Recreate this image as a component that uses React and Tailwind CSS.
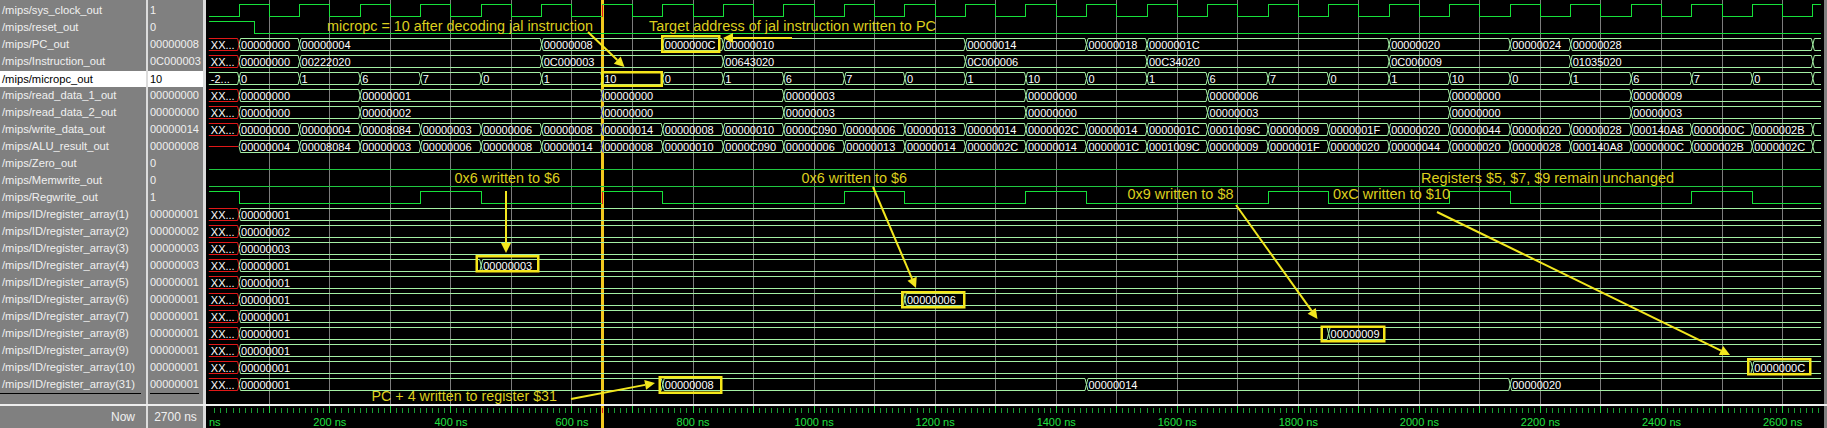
import React from 'react';

// waveform geometry: 100 ns = 60.53 px, rows are 17 px apart
const X = (t) => 208.8 + t * 0.6053;
const END_X = 1821;
const CURSOR_T = 650;
const top = (i) => 4.5 + 17 * i;
const bot = (i) => 16.5 + 17 * i;

const signals = [
    ['/mips/sys_clock_out', '1'],
    ['/mips/reset_out', '0'],
    ['/mips/PC_out', '00000008'],
    ['/mips/Instruction_out', '0C000003'],
    ['/mips/micropc_out', '10'],
    ['/mips/read_data_1_out', '00000000'],
    ['/mips/read_data_2_out', '00000000'],
    ['/mips/write_data_out', '00000014'],
    ['/mips/ALU_result_out', '00000008'],
    ['/mips/Zero_out', '0'],
    ['/mips/Memwrite_out', '0'],
    ['/mips/Regwrite_out', '1'],
    ['/mips/ID/register_array(1)', '00000001'],
    ['/mips/ID/register_array(2)', '00000002'],
    ['/mips/ID/register_array(3)', '00000003'],
    ['/mips/ID/register_array(4)', '00000003'],
    ['/mips/ID/register_array(5)', '00000001'],
    ['/mips/ID/register_array(6)', '00000001'],
    ['/mips/ID/register_array(7)', '00000001'],
    ['/mips/ID/register_array(8)', '00000001'],
    ['/mips/ID/register_array(9)', '00000001'],
    ['/mips/ID/register_array(10)', '00000001'],
    ['/mips/ID/register_array(31)', '00000001'],
];

const hex = (v) => v.padStart(8, '0');
// every 100 ns starting at 50 ns
const steps = (list, from = 50) => list.map((v, i) => [from + i * 100, String(v)]);

const buses = {
    2: [[50, '00000000'], [150, '00000004'], [550, '00000008'], [750, '0000000C'], [850, '00000010'], [1250, '00000014'], [1450, '00000018'], [1550, '0000001C'], [1950, '00000020'], [2150, '00000024'], [2250, '00000028'], [2650, '']],
    3: [[50, '00000000'], [150, '00222020'], [550, '0C000003'], [850, '00643020'], [1250, '0C000006'], [1550, '00C34020'], [1950, '0C000009'], [2250, '01035020'], [2650, '']],
    4: [...steps([0, 1, 6, 7, 0, 1, 10, 0, 1, 6, 7, 0, 1, 10, 0, 1, 6, 7, 0, 1, 10, 0, 1, 6, 7, 0]), [2650, '']],
    5: [[50, '00000000'], [250, '00000001'], [650, '00000000'], [950, '00000003'], [1350, '00000000'], [1650, '00000006'], [2050, '00000000'], [2350, '00000009']],
    6: [[50, '00000000'], [250, '00000002'], [650, '00000000'], [950, '00000003'], [1350, '00000000'], [1650, '00000003'], [2050, '00000000'], [2350, '00000003']],
    7: [...steps(['0', '4', '8084', '3', '6', '8', '14', '8', '10', 'C090', '6', '13', '14', '2C', '14', '1C', '1009C', '9', '1F', '20', '44', '20', '28', '140A8', 'C', '2B'].map(hex)), [2650, '']],
    8: [...steps(['4', '8084', '3', '6', '8', '14', '8', '10', 'C090', '6', '13', '14', '2C', '14', '1C', '1009C', '9', '1F', '20', '44', '20', '28', '140A8', 'C', '2B', '2C'].map(hex)), [2650, '']],
    12: [[50, '00000001']],
    13: [[50, '00000002']],
    14: [[50, '00000003']],
    15: [[50, '00000001'], [450, '00000003']],
    16: [[50, '00000001']],
    17: [[50, '00000001'], [1150, '00000006']],
    18: [[50, '00000001']],
    19: [[50, '00000001'], [1850, '00000009']],
    20: [[50, '00000001']],
    21: [[50, '00000001'], [2550, '0000000C']],
    22: [[50, '00000001'], [750, '00000008'], [1450, '00000014'], [2150, '00000020']],
};

const regwriteEdges = [50, 350, 450, 650, 750, 1050, 1150, 1350, 1450, 1750, 1850, 2050, 2150, 2450, 2550];

const clockPath = () => {
    let d = `M${X(0)} ${bot(0)}`;
    for (let t = 50; t <= 2650; t += 50) {
        d += ` H${X(t)} V${(t + 50) % 100 === 0 ? top(0) : bot(0)}`;
    }
    return d + ` H${END_X}`;
};

const regwritePath = () => {
    let d = `M${X(0)} ${top(11)}`;
    let high = true;
    regwriteEdges.forEach((t) => {
        high = !high;
        d += ` H${X(t)} V${high ? top(11) : bot(11)}`;
    });
    return d + ` H${END_X}`;
};

const segment = (i, x1, x2, open) => {
    const mid = (top(i) + bot(i)) / 2;
    if (open) return `M${x2} ${top(i)} H${x1 + 1.5} L${x1} ${mid} L${x1 + 1.5} ${bot(i)} H${x2}`;
    return `M${x1 + 1.5} ${top(i)} H${x2 - 1.5} L${x2} ${mid} L${x2 - 1.5} ${bot(i)} H${x1 + 1.5} L${x1} ${mid} Z`;
};

const BusRow = ({ row, segs }) => (
    <g>
        {row === 8 ? (
            <path d={`M${X(0)} ${top(8) + 6} H${X(50) - 1}`} stroke="#e01818" fill="none" />
        ) : (
            <>
                <path d={`M${X(0)} ${top(row)} H${X(50) - 1.5} L${X(50)} ${top(row) + 6} L${X(50) - 1.5} ${bot(row)} H${X(0)}`} stroke={row === 4 ? '#a4f0a4' : '#e01818'} fill="none" />
                <text x={X(0) + 2} y={bot(row) - 2} fill="#ffffff">{row === 4 ? '-2...' : 'XX...'}</text>
            </>
        )}
        {segs.map(([t, label], k) => {
            const x1 = X(t);
            const next = segs[k + 1];
            const x2 = next ? X(next[0]) : END_X;
            return (
                <g key={t}>
                    <path d={segment(row, x1, x2, !next)} stroke="#a4f0a4" fill="none" />
                    {label && <text x={x1 + 2} y={bot(row) - 2} fill="#ffffff">{label}</text>}
                </g>
            );
        })}
        {segs.some(([t]) => t === CURSOR_T) && (
            <path d={`M${X(CURSOR_T) + 1} ${top(row)} L${X(CURSOR_T) - 1} ${top(row) + 6} L${X(CURSOR_T) + 1} ${bot(row)}`} stroke="#5030d0" fill="none" />
        )}
    </g>
);

const Arrow = ({ x1, y1, x2, y2 }) => {
    const len = Math.hypot(x2 - x1, y2 - y1);
    const ux = (x2 - x1) / len;
    const uy = (y2 - y1) / len;
    const bx = x2 - ux * 10;
    const by = y2 - uy * 10;
    return (
        <g>
            <line x1={x1} y1={y1} x2={bx} y2={by} stroke="#f2e61e" strokeWidth="2" />
            <polygon points={`${x2},${y2} ${bx - uy * 5},${by + ux * 5} ${bx + uy * 5},${by - ux * 5}`} fill="#f2e61e" />
        </g>
    );
};

const arrows = [
    [588, 32, 624.5, 67],
    [792, 38, 723, 38],
    [506, 191, 506, 253],
    [873, 187, 916, 288],
    [1236, 205, 1317.5, 319],
    [1437, 212, 1730, 355],
    [571, 399, 655, 383],
];

const notes = [
    ['micropc = 10 after decoding jal instruction', 327, 31, 266],
    ['Target address of jal instruction written to PC', 649, 31, 287],
    ['0x6 written to $6', 454.5, 183, 105.5],
    ['0x6 written to $6', 801.5, 183, 105.5],
    ['Registers $5, $7, $9 remain unchanged', 1421, 183, 253],
    ['0x9 written to $8', 1127.5, 199, 106],
    ['0xC written to $10', 1333, 199, 117],
    ['PC + 4 written to register $31', 371.5, 400.5, 185.5],
];

// outer edges of the highlight boxes
const boxes = [
    [601, 71, 663, 87],
    [661, 35, 720.5, 53],
    [475.5, 255, 539.5, 272.5],
    [901, 291, 965.5, 308.5],
    [1320.5, 325.5, 1385.5, 342.5],
    [1747, 358, 1811.5, 375.5],
    [658.5, 376, 722.5, 394],
];

const gridTimes = Array.from({ length: 26 }, (_, i) => (i + 1) * 100);
const tickTimes = Array.from({ length: 266 }, (_, i) => (i + 1) * 10);
const labelTimes = Array.from({ length: 13 }, (_, i) => (i + 1) * 200);

const Waves = () => (
    <svg width="1618" height="404" viewBox="206 0 1618 404" className="block bg-black text-[11px] font-['Liberation_Sans',sans-serif]">
        <g shapeRendering="crispEdges">
            {gridTimes.map((t) => (
                <line key={t} x1={X(t)} y1="0" x2={X(t)} y2="404" stroke="#7c7c7c" />
            ))}
        </g>
        <rect x="601" y="0" width="3" height="404" fill="#f2c81e" />

        <g shapeRendering="crispEdges" fill="none">
            <path d={clockPath()} stroke="#16e03a" />
            <path d={`M${X(0)} ${top(1)} H${X(75)} V${bot(1)} H${END_X}`} stroke="#16e03a" />
            <path d={`M${X(0)} ${bot(9)} H${END_X}`} stroke="#20c840" />
            <path d={`M${X(0)} ${bot(10)} H${END_X}`} stroke="#20c840" />
            <path d={regwritePath()} stroke="#16e03a" />
            <path d={`M${X(CURSOR_T)} ${top(0)} V${bot(0)} M${X(CURSOR_T)} ${top(11)} V${bot(11)}`} stroke="#e01818" />
        </g>

        {Object.entries(buses).map(([row, segs]) => (
            <BusRow key={row} row={Number(row)} segs={segs} />
        ))}

        {boxes.map(([x1, y1, x2, y2]) => (
            <rect key={`${x1}-${y1}`} x={x1 + 1.25} y={y1 + 1.25} width={x2 - x1 - 2.5} height={y2 - y1 - 2.5} stroke="#f5e61a" strokeWidth="2.5" fill="none" />
        ))}
        {arrows.map(([x1, y1, x2, y2]) => (
            <Arrow key={`${x1}-${y1}`} x1={x1} y1={y1} x2={x2} y2={y2} />
        ))}
        {notes.map(([label, x, y, w]) => (
            <text key={`${label}-${x}`} x={x} y={y} fill="#dccf1e" fontSize="14" textLength={w} lengthAdjust="spacingAndGlyphs">{label}</text>
        ))}
    </svg>
);

const TimeAxis = () => (
    <svg width="1618" height="22" viewBox="206 406 1618 22" className="block bg-black text-[11px] font-['Liberation_Sans',sans-serif]">
        <rect x="601" y="406" width="3" height="22" fill="#f2c81e" />
        <g shapeRendering="crispEdges">
            {tickTimes.map((t) => (
                <line
                    key={t}
                    x1={X(t)}
                    y1={t % 100 === 0 ? 406 : 408}
                    x2={X(t)}
                    y2="413"
                    stroke={t === CURSOR_T ? '#e01818' : t % 100 === 0 ? '#20d040' : '#1a9c34'}
                />
            ))}
        </g>
        <text x="209" y="426" fill="#20e040">ns</text>
        {labelTimes.map((t) => (
            <text key={t} x={X(t)} y="426" fill="#20e040" textAnchor="middle">{t} ns</text>
        ))}
    </svg>
);

const App = () => (
    <div className="w-[1827px] h-[428px] flex flex-col overflow-hidden bg-[#808080] text-[#f0f0f0] font-['Liberation_Sans',sans-serif]">
        <div className="flex h-[404px]">
            {/* Signal names */}
            <div className="w-[146px] pt-[2px] text-[11.2px]">
                {signals.map(([name], i) => (
                    <div key={name} className={`h-[17px] pl-[2px] flex items-center whitespace-nowrap ${i === 4 ? 'bg-white text-black border-t border-[#808080]' : ''}`}>
                        {name}
                    </div>
                ))}
                <div className="h-px mr-[5px] bg-black"></div>
            </div>
            <div className="w-[2px] bg-[#dcdcdc]"></div>
            {/* Values at the cursor */}
            <div className="w-[55px] pt-[2px] text-[11px]">
                {signals.map(([name, value], i) => (
                    <div key={name} className={`h-[17px] pl-[2px] flex items-center ${i === 4 ? 'bg-white text-black border-t border-[#808080]' : ''}`}>
                        {value}
                    </div>
                ))}
                <div className="h-px ml-[2px] mr-[4px] bg-black"></div>
            </div>
            <div className="w-[3px] bg-[#dcdcdc]"></div>
            <Waves />
            <div className="w-[3px]"></div>
        </div>
        <div className="h-[2px] bg-[#eeeeee]"></div>
        <div className="flex flex-1">
            <div className="w-[146px] pr-[11px] text-right text-[12px] leading-[22px]">Now</div>
            <div className="w-[2px] bg-[#dcdcdc]"></div>
            <div className="w-[55px] text-center text-[12px] leading-[22px]">2700 ns</div>
            <div className="w-[3px] bg-[#dcdcdc]"></div>
            <TimeAxis />
            <div className="w-[3px]"></div>
        </div>
    </div>
);

export default App;
